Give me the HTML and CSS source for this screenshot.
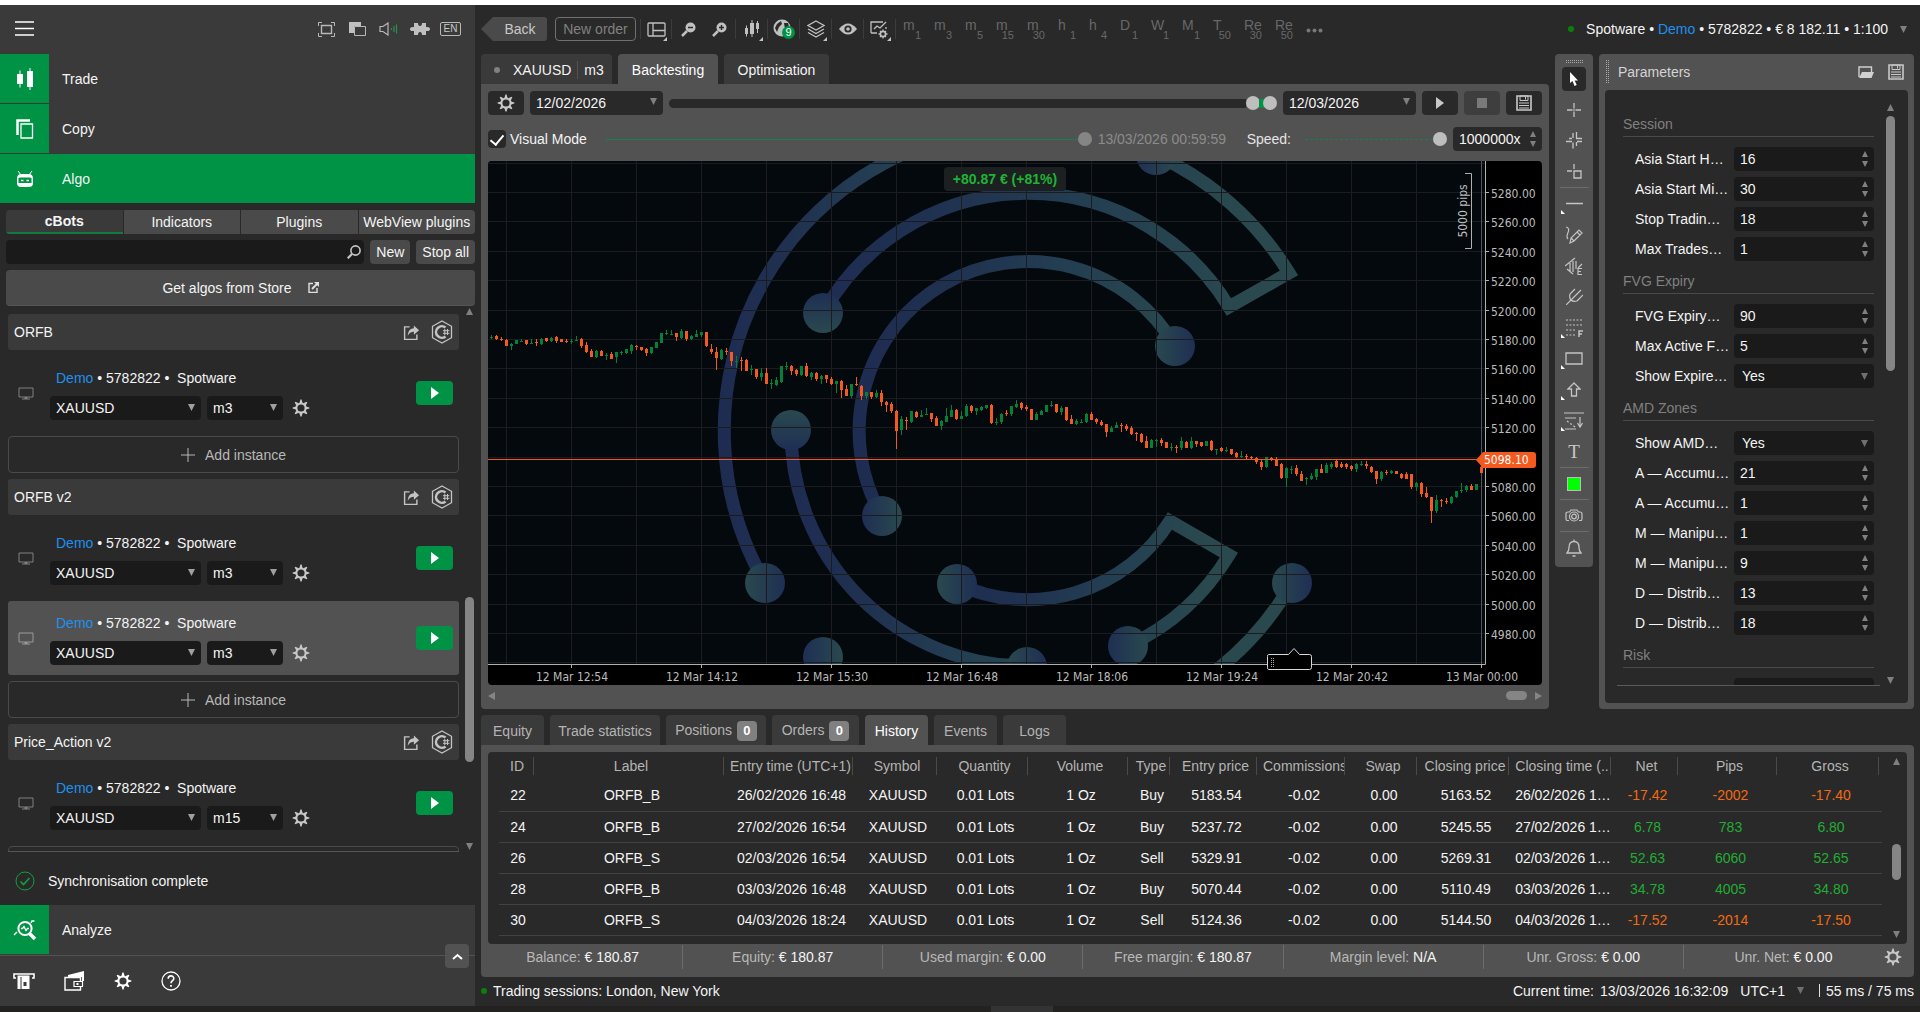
FILE: index.html
```html
<!DOCTYPE html>
<html lang="en">
<head>
<meta charset="utf-8">
<title>Algo – Backtesting XAUUSD m3</title>
<link rel="stylesheet" href="styles.css">
</head>
<body>
<svg class="sprite" aria-hidden="true">
  <symbol id="gear" viewBox="0 0 18 18"><circle cx="9" cy="9" r="4.6" fill="none" stroke="currentColor" stroke-width="2"/><g fill="currentColor"><path id="tooth" d="M7.400 4 8.400.6h1.200L10.600 4z"/><use href="#tooth" transform="rotate(45 9 9)"/><use href="#tooth" transform="rotate(90 9 9)"/><use href="#tooth" transform="rotate(135 9 9)"/><use href="#tooth" transform="rotate(180 9 9)"/><use href="#tooth" transform="rotate(225 9 9)"/><use href="#tooth" transform="rotate(270 9 9)"/><use href="#tooth" transform="rotate(315 9 9)"/></g></symbol>
  <symbol id="csharp" viewBox="0 0 22 24"><path d="M11 1 20.500 6.300v11.400L11 23 1.500 17.700V6.300z" fill="none" stroke="currentColor" stroke-width="1.300"/><path d="M14.500 7.500A5.800 5.800 0 1 0 14.500 16.500" fill="none" stroke="currentColor" stroke-width="2.600"/><path d="M13.800 9v6M16.500 9v6M12 10.700h6.400M12 13.300h6.400" stroke="currentColor" stroke-width="1"/></symbol>
  <symbol id="share" viewBox="0 0 18 18"><path d="M7 3H1.700v13.300h13V11" fill="none" stroke="currentColor" stroke-width="1.500"/><path d="M5 12.500C5.500 7 8 4.800 11.500 4.600V1.500l5.500 5-5.500 4.800V8.200C9 8.200 7 9 5 12.500z" fill="currentColor"/></symbol>
  <symbol id="monitor" viewBox="0 0 16 13"><path d="M1 1h14v9H1z" fill="none" stroke="currentColor"/><path d="M6.500 10h3v1.500H12v1H4v-1h2.500z" fill="currentColor"/></symbol>
  <symbol id="play" viewBox="0 0 10 12"><path d="M1 0 9 6 1 12z" fill="currentColor"/></symbol>
  <symbol id="plus" viewBox="0 0 14 14"><path d="M0 7h14M7 0v14" stroke="currentColor"/></symbol>
  <symbol id="down" viewBox="0 0 8 7"><path d="M0 0h7L3.500 7z" fill="currentColor"/></symbol>
  <symbol id="up" viewBox="0 0 8 7"><path d="M0 7h7L3.500 0z" fill="currentColor"/></symbol>
  <symbol id="spin" viewBox="0 0 8 18"><path d="M1 7h6L4 1zM1 11h6l-3 6z" fill="currentColor"/></symbol>
  <symbol id="disk" viewBox="0 0 16 16"><path d="M1 1h14v14H1z" fill="none" stroke="currentColor" stroke-width="1.600"/><path d="M4 1h8v4.500H4zM9.500 2v2.500" fill="none" stroke="currentColor"/><path d="M3 8h10M3 10.500h10M3 13h10" stroke="currentColor"/></symbol>
</svg>

<div class="app">
<aside class="sidebar">
  <header class="side-top">
    <button class="icon-btn" aria-label="Menu"><svg width="20" height="16" viewBox="0 0 20 16"><path d="M0 1h19M0 7.500h19M0 14h19" stroke="#fff" stroke-width="1.300"/></svg></button>
    <div class="side-tools">
      <button class="icon-btn" aria-label="Full screen"><svg width="17" height="15" viewBox="0 0 17 15" fill="none" stroke="#b8b8b8"><path d="M3.500 3.500h10v8h-10z" stroke-width="1.400"/><path d="M.5 4V.5H4M13 .5h3.500V4M16.500 11v3.500H13M4 14.500H.5V11"/></svg></button>
      <button class="icon-btn" aria-label="Windows"><svg width="17" height="15" viewBox="0 0 17 15"><path d="M0 0h12v4H5v7H0z" fill="#c0c0c0"/><path d="M5.500 4.500h11v9h-11z" fill="none" stroke="#b8b8b8"/></svg></button>
      <button class="icon-btn" aria-label="Sound"><svg width="20" height="14" viewBox="0 0 20 14"><path d="M1 4.500h3L9 1v12L4 9.500H1z" fill="none" stroke="#b8b8b8" stroke-width="1.200"/><path d="M12.500 6v2M15 4v6M17.500 2.500v9" stroke="#2a9048" stroke-width="1.200"/></svg></button>
      <button class="icon-btn" aria-label="Plugins"><svg width="20" height="14" viewBox="0 0 20 14"><path d="M4 1h4q0 3 2 3t2-3h4v4q4-.5 4 2t-4 2v4h-4q0-3-2-3t-2 3H4V9Q0 9.500 0 7t4-2z" fill="#c0c0c0"/></svg></button>
      <button class="lang">EN</button>
    </div>
  </header>

  <nav class="nav">
    <a href="#trade" class="nav-row"><span class="nav-icon"><svg width="18" height="22" viewBox="0 0 18 22" fill="#fff"><path d="M1 6h6v10H1zM3.500 2.500h1v17h-1zM11 3h6v16h-6zM13.500 0h1v22h-1z"/></svg></span>Trade</a>
    <a href="#copy" class="nav-row"><span class="nav-icon"><svg width="18" height="20" viewBox="0 0 18 20" fill="none" stroke="#fff"><path d="M1.500 16V1.500H14" stroke-width="2.500"/><path d="M5 5h11.500v14H5z" stroke-width="1.300"/></svg></span>Copy</a>
    <a href="#algo" class="nav-row nav-active"><span class="nav-icon"><svg width="18" height="16" viewBox="0 0 18 16"><path d="M2 0 5 4M16 0l-3 4" stroke="#fff"/><path d="M1 8Q1 3 5 3h8q4 0 4 5v4q0 4-4 4H5q-4 0-4-4z" fill="#fff"/><path d="M2.500 7.500Q3 6.500 4.500 6.500h9q1.500 0 2 1v4.500h-13z" fill="#009245"/><path d="M5 9.500h2.500M10.500 9.500H13" stroke="#fff" stroke-width="1.500"/></svg></span>Algo</a>
  </nav>

  <div class="algo">
    <div class="side-tabs" role="tablist">
      <button class="side-tab on" role="tab">cBots</button><button class="side-tab" role="tab">Indicators</button><button class="side-tab" role="tab">Plugins</button><button class="side-tab" role="tab">WebView plugins</button>
    </div>
    <div class="search-row">
      <label class="search"><input type="search" aria-label="Search cBots"><svg width="14" height="14" viewBox="0 0 14 14" fill="none" stroke="#c4c4c4"><circle cx="8.500" cy="5.500" r="4.600" stroke-width="1.600"/><path d="M5 9 .7 13.300" stroke-width="2.200"/></svg></label>
      <button class="btn">New</button>
      <button class="btn">Stop all</button>
    </div>
    <button class="store">Get algos from Store <svg width="11" height="11" viewBox="0 0 11 11" fill="none" stroke="#e0e0e0"><path d="M5 1.500H1v9h8V6" stroke-width="1.400"/><path d="M4 7l5-5" stroke-width="2"/><path d="M6 0h5v5z" fill="#e0e0e0" stroke="none"/></svg></button>
    <div class="list-wrap">
      <div class="list">
        <div class="bot-head"><span>ORFB</span><svg width="17" height="17"><use href="#share"/></svg><svg width="22" height="24"><use href="#csharp"/></svg></div>
        <div class="inst">
          <svg class="mon" width="16" height="13"><use href="#monitor"/></svg>
          <div class="inst-main">
            <p><span class="demo">Demo</span> • 5782822 •&nbsp; Spotware</p>
            <div class="inst-ctl"><span class="sel sel-sym"><select aria-label="Symbol"><option>XAUUSD</option></select><svg width="8" height="7"><use href="#down"/></svg></span><span class="sel sel-tf"><select aria-label="Timeframe"><option>m3</option></select><svg width="8" height="7"><use href="#down"/></svg></span><button class="icon-btn" aria-label="Settings"><svg width="18" height="18"><use href="#gear"/></svg></button></div>
          </div>
          <button class="run" aria-label="Start"><svg width="10" height="12"><use href="#play"/></svg></button>
        </div>
        <button class="add"><svg width="14" height="14"><use href="#plus"/></svg>Add instance</button>
        <div class="bot-head"><span>ORFB v2</span><svg width="17" height="17"><use href="#share"/></svg><svg width="22" height="24"><use href="#csharp"/></svg></div>
        <div class="inst">
          <svg class="mon" width="16" height="13"><use href="#monitor"/></svg>
          <div class="inst-main">
            <p><span class="demo">Demo</span> • 5782822 •&nbsp; Spotware</p>
            <div class="inst-ctl"><span class="sel sel-sym"><select aria-label="Symbol"><option>XAUUSD</option></select><svg width="8" height="7"><use href="#down"/></svg></span><span class="sel sel-tf"><select aria-label="Timeframe"><option>m3</option></select><svg width="8" height="7"><use href="#down"/></svg></span><button class="icon-btn" aria-label="Settings"><svg width="18" height="18"><use href="#gear"/></svg></button></div>
          </div>
          <button class="run" aria-label="Start"><svg width="10" height="12"><use href="#play"/></svg></button>
        </div>
        <div class="inst inst-on">
          <svg class="mon" width="16" height="13"><use href="#monitor"/></svg>
          <div class="inst-main">
            <p><span class="demo">Demo</span> • 5782822 •&nbsp; Spotware</p>
            <div class="inst-ctl"><span class="sel sel-sym"><select aria-label="Symbol"><option>XAUUSD</option></select><svg width="8" height="7"><use href="#down"/></svg></span><span class="sel sel-tf"><select aria-label="Timeframe"><option>m3</option></select><svg width="8" height="7"><use href="#down"/></svg></span><button class="icon-btn" aria-label="Settings"><svg width="18" height="18"><use href="#gear"/></svg></button></div>
          </div>
          <button class="run" aria-label="Start"><svg width="10" height="12"><use href="#play"/></svg></button>
        </div>
        <button class="add"><svg width="14" height="14"><use href="#plus"/></svg>Add instance</button>
        <div class="bot-head"><span>Price_Action v2</span><svg width="17" height="17"><use href="#share"/></svg><svg width="22" height="24"><use href="#csharp"/></svg></div>
        <div class="inst">
          <svg class="mon" width="16" height="13"><use href="#monitor"/></svg>
          <div class="inst-main">
            <p><span class="demo">Demo</span> • 5782822 •&nbsp; Spotware</p>
            <div class="inst-ctl"><span class="sel sel-sym"><select aria-label="Symbol"><option>XAUUSD</option></select><svg width="8" height="7"><use href="#down"/></svg></span><span class="sel sel-tf"><select aria-label="Timeframe"><option>m15</option></select><svg width="8" height="7"><use href="#down"/></svg></span><button class="icon-btn" aria-label="Settings"><svg width="18" height="18"><use href="#gear"/></svg></button></div>
          </div>
          <button class="run" aria-label="Start"><svg width="10" height="12"><use href="#play"/></svg></button>
        </div>
        <div class="add add-next"></div>
      </div>
      <div class="vbar vbar-list"><svg width="8" height="7"><use href="#up"/></svg><div class="vtrack"><i class="thumb"></i></div><svg width="8" height="7"><use href="#down"/></svg></div>
    </div>
    <div class="sync"><svg width="20" height="20" viewBox="0 0 20 20" fill="none" stroke="#12a03c"><circle cx="10" cy="10" r="9"/><path d="m5.500 10.500 3 3L14.500 7" stroke-width="1.600"/></svg>Synchronisation complete</div>
  </div>

  <a href="#analyze" class="nav-row nav-last"><span class="nav-icon"><svg width="24" height="22" viewBox="0 0 24 22" fill="none" stroke="#fff"><circle cx="12" cy="9.500" r="6.600" stroke-width="2"/><path d="M8 9.500h1.500l1.500-2 2 4 1.500-2H16" stroke-width="1.300"/><path d="m16.500 14.500 5.500 5.500" stroke-width="3.600"/><path d="M1 16l3-3M18 4l1-2h2.500" stroke-width="1.500"/></svg></span>Analyze</a>
  <footer class="side-foot">
    <button class="icon-btn" aria-label="Deposit"><svg width="22" height="16" viewBox="0 0 22 16"><path d="M3 5H1V1h20v4h-2" fill="none" stroke="#fff" stroke-width="1.600"/><path d="M4.500 2.500h12V16h-12z" fill="#fff"/><path d="M8 4v12" stroke="#3a3a3a" stroke-width="1"/><path d="M10.500 9h3v4h-3z" fill="#3a3a3a"/></svg></button>
    <button class="icon-btn" aria-label="Wallet"><svg width="21" height="20" viewBox="0 0 21 20"><path d="M4 4 20 0v10h-2V6H4z" fill="#fff"/><path d="M16.500 10V6.500H1v12.500h15.500V16" fill="none" stroke="#fff" stroke-width="1.400"/><path d="M10 10.500h8.500v5H10z" fill="#3a3a3a" stroke="#fff" stroke-width="1.200"/><path d="M12.500 12h2v2h-2z" fill="#fff"/></svg></button>
    <button class="icon-btn" aria-label="Settings"><svg width="18" height="18"><use href="#gear"/></svg></button>
    <button class="icon-btn" aria-label="Help"><svg width="20" height="20" viewBox="0 0 20 20" fill="none" stroke="#fff"><circle cx="10" cy="10" r="9" stroke-width="1.300"/><path d="M7.200 7.800C7.200 4 12.800 4 12.800 7.500c0 2.200-2.800 2.200-2.800 4.700" stroke-width="1.600"/><path d="M10 14v1.800" stroke-width="1.800"/></svg></button>
    <button class="collapse" aria-label="Collapse"><svg width="11" height="7" viewBox="0 0 11 7"><path d="m1 6 4.500-4L10 6" fill="none" stroke="#fff" stroke-width="2"/></svg></button>
  </footer>
</aside>

<main class="main">
  <header class="toolbar">
    <button class="back">Back</button>
    <button class="new-order" disabled>New order</button>
    <div class="tool-icons">
      <button class="tool corner" aria-label="Layout"><svg width="19" height="15" viewBox="0 0 19 15" fill="none" stroke="#c0c0c0" stroke-width="1.300"><rect x="1" y="1" width="17" height="13" rx="1"/><path d="M6 1v13M6 8.500h12"/></svg></button>
      <button class="tool sep" aria-label="Zoom out"><svg width="15" height="15" viewBox="0 0 15 15"><circle cx="9.500" cy="5.500" r="5" fill="#c0c0c0"/><path d="M6 9 1 14" stroke="#c0c0c0" stroke-width="2.500"/><path d="M7 5.500h5" stroke="#292929" stroke-width="1.500"/></svg></button>
      <button class="tool" aria-label="Zoom in"><svg width="15" height="15" viewBox="0 0 15 15"><circle cx="9.500" cy="5.500" r="5" fill="#c0c0c0"/><path d="M6 9 1 14" stroke="#c0c0c0" stroke-width="2.500"/><path d="M7 5.500h5M9.500 3v5" stroke="#292929" stroke-width="1.500"/></svg></button>
      <button class="tool sep corner" aria-label="Chart type"><svg width="16" height="18" viewBox="0 0 16 18" fill="#c0c0c0"><path d="M1 8h3v6H1zM2 5.500h1v11H2zM6 3h4v11H6zM7.500 0h1v17h-1zM13 1h1v12h-1zM12 3h3v6h-3z"/></svg></button>
      <button class="tool sep" aria-label="Symbols"><svg width="24" height="20" viewBox="0 0 24 20"><circle cx="10" cy="9" r="8.500" fill="#c0c0c0"/><path d="M5 5l4-3 1 3-3 3-2 5-2-4zM12 4h4l1 4-4 2z" fill="#292929"/><circle cx="16.500" cy="13.500" r="6.500" fill="#009245"/><text x="16.500" y="17" class="badge-n">9</text></svg></button>
      <button class="tool sep corner" aria-label="Objects"><svg width="18" height="18" viewBox="0 0 18 18" fill="none" stroke="#c0c0c0" stroke-width="1.300"><path d="m9 1 8 4.500L9 10 1 5.500zM1 9l8 4.500L17 9M1 12.500 9 17l8-4.500"/></svg></button>
      <button class="tool sep" aria-label="Visibility"><svg width="20" height="12" viewBox="0 0 20 12"><path d="M1 6Q10-5 19 6 10 17 1 6z" fill="#c0c0c0"/><circle cx="10" cy="6" r="3.600" fill="#292929"/><circle cx="10" cy="6" r="1.800" fill="#c0c0c0"/></svg></button>
      <button class="tool sep corner" aria-label="Chart settings"><svg width="20" height="19" viewBox="0 0 20 19" fill="none" stroke="#c0c0c0" stroke-width="1.300"><path d="M16 7v2M1 13V2h12M1 13h6M4 9l3-3 3 2 6-6"/><circle cx="13" cy="14" r="2.600" stroke-width="1.600"/><path d="M13 9.500v2M13 16.500v2M8.500 14h2M15.500 14h2M10 11l1 1M15 16l1 1M16 11l-1 1M11 16l-1 1"/></svg></button>
    </div>
    <div class="frames">
      <button>m<sub>1</sub></button><button>m<sub>3</sub></button><button>m<sub>5</sub></button><button>m<sub>15</sub></button><button>m<sub>30</sub></button><button>h<sub>1</sub></button><button>h<sub>4</sub></button><button>D<sub>1</sub></button><button>W<sub>1</sub></button><button>M<sub>1</sub></button><button>T<sub>50</sub></button><button>Re<sub>30</sub></button><button>Re<sub>50</sub></button>
      <button class="more" aria-label="More"><svg width="17" height="5" viewBox="0 0 17 5" fill="#777"><circle cx="2.500" cy="2.500" r="2"/><circle cx="8.500" cy="2.500" r="2"/><circle cx="14.500" cy="2.500" r="2"/></svg></button>
    </div>
    <button class="account"><i class="dot"></i><span>Spotware • <span class="demo">Demo</span> • 5782822 • € 8 182.11 • 1:100</span><svg width="8" height="7"><use href="#down"/></svg></button>
  </header>

  <div class="work">
    <section class="center">
      <div class="tabs">
        <button class="tab tab-sym"><i></i><span>XAUUSD</span><span>m3</span></button>
        <button class="tab tab-mid on">Backtesting</button>
        <button class="tab tab-opt">Optimisation</button>
      </div>
      <div class="panel">
        <div class="ctl-row">
          <button class="dark w36" aria-label="Backtest settings"><svg width="18" height="18"><use href="#gear"/></svg></button>
          <span class="sel sel-date"><select aria-label="From"><option>12/02/2026</option></select><svg width="8" height="7"><use href="#down"/></svg></span>
          <div class="range"><i class="track"></i><i class="knob"></i><i class="fill"></i><i class="knob"></i></div>
          <span class="sel sel-date"><select aria-label="To"><option>12/03/2026</option></select><svg width="8" height="7"><use href="#down"/></svg></span>
          <button class="dark w36" aria-label="Play"><svg width="10" height="12"><use href="#play"/></svg></button>
          <button class="dark w36 off" disabled aria-label="Stop"><svg width="10" height="10"><rect width="10" height="10" fill="#7a7a7a"/></svg></button>
          <button class="dark w36" aria-label="Save"><svg width="16" height="16"><use href="#disk"/></svg></button>
        </div>
        <div class="ctl-row">
          <label class="check"><input type="checkbox" checked>Visual Mode</label>
          <div class="range progress"><i class="line"></i><i class="knob dim"></i></div>
          <span class="muted">13/03/2026 00:59:59</span>
          <label class="speed" for="speed">Speed:</label>
          <div class="range speedbar"><i class="line dashed"></i><i class="knob"></i></div>
          <span class="spin spin-speed"><input id="speed" type="text" value="1000000x"><svg width="8" height="18"><use href="#spin"/></svg></span>
        </div>
        <div class="chart"><svg id="chart" viewBox="0 0 1054 524" preserveAspectRatio="none" role="img" aria-label="XAUUSD m3 chart"></svg></div>
        <div class="hbar"><svg width="7" height="8" viewBox="0 0 7 8"><path d="M7 0v8L0 4z" fill="#858585"/></svg><i class="thumb"></i><svg width="7" height="8" viewBox="0 0 7 8"><path d="M0 0v8l7-4z" fill="#858585"/></svg></div>
      </div>
    </section>

    <aside class="draw">
      <i class="grip"></i>
      <button class="on" aria-label="Cursor"><svg width="10" height="14" viewBox="0 0 10 14"><path d="M1 0v11l2.500-2 2 5 2.200-1-2-4.600H9z" fill="#fff"/></svg></button>
      <button aria-label="Crosshair"><svg width="14" height="14" viewBox="0 0 14 14" stroke="#c4c4c4" stroke-width="1.300"><path d="M0 7h5.500M8.500 7H14M7 0v5.500M7 8.500V14M6.300 7h1.400"/></svg></button>
      <button aria-label="Sync crosshair"><svg width="17" height="17" viewBox="0 0 17 17" stroke="#c4c4c4" stroke-width="1.300"><path d="M7 1v5M10.500 0v6.500M10 6.500h6M0 9.500h6M3 6.500h3M7 10.500v6M10.500 10v4M11 9.500h5"/></svg></button>
      <button aria-label="Measure"><svg width="15" height="15" viewBox="0 0 15 15" fill="none" stroke="#c4c4c4" stroke-width="1.300"><path d="M0 7h5M7 0v5M7 7h7v7H7z"/></svg></button>
      <hr>
      <button class="corner" aria-label="Line"><svg width="17" height="3"><path d="M0 1.500h17" stroke="#c4c4c4" stroke-width="1.500"/></svg></button>
      <button aria-label="Pencil"><svg width="18" height="18" viewBox="0 0 18 18" fill="none" stroke="#c4c4c4" stroke-width="1.200"><path d="M1 1q4 1 2 5.500T3 13M5 17l1-5 8-8 3 3-8 8zM12 6l3 3M6 12l3 3"/></svg></button>
      <button aria-label="Elliott waves"><svg width="18" height="18" viewBox="0 0 18 18" fill="none" stroke="#c4c4c4" stroke-width="1.200"><path d="M0 9 10 1M5 6v8M8 4v11M11 4v8M2 12l6 5M13 11l4-4M17 11.500h-4v6h4M13 14.500h3"/></svg></button>
      <button aria-label="Pitchfork"><svg width="17" height="17" viewBox="0 0 17 17" fill="none" stroke="#c4c4c4" stroke-width="1.200"><path d="M0 17l5-5M4 6q-1 4 1 6t6 1M4 6l5-5M5 12 15 2M11 13l6-6"/></svg></button>
      <button class="corner" aria-label="Fibonacci"><svg width="18" height="18" viewBox="0 0 18 18" fill="none" stroke="#c4c4c4" stroke-width="1.200"><path d="M1 1h17M1 6h17M1 11h9M1 16h9" stroke-dasharray="2 1.500"/><path d="M14 18v-6h4M14 15h3" stroke-width="1.500"/></svg></button>
      <button class="corner" aria-label="Rectangle"><svg width="18" height="13" viewBox="0 0 18 13"><path d="M1 1h16v11H1z" fill="none" stroke="#c4c4c4" stroke-width="1.300"/></svg></button>
      <button class="corner" aria-label="Arrow"><svg width="14" height="15" viewBox="0 0 14 15"><path d="m7 1 6 6H9.500v7h-5V7H1z" fill="none" stroke="#c4c4c4" stroke-width="1.300"/></svg></button>
      <button class="corner" aria-label="Position"><svg width="20" height="18" viewBox="0 0 20 18" fill="none" stroke="#c4c4c4" stroke-width="1.200"><path d="M0 1h20M1 6h11M1 17h11M16 5v9M13.500 11l2.500 4 2.500-4"/><path d="M3 9l8 6" stroke-dasharray="2 2"/></svg></button>
      <button class="text-tool" aria-label="Text">T</button>
      <hr>
      <button aria-label="Colour"><i class="swatch"></i></button>
      <hr>
      <button aria-label="Screenshot"><svg width="18" height="13" viewBox="0 0 18 13" fill="none" stroke="#c4c4c4" stroke-width="1.200"><path d="M4 11.500H2Q1 11.500 1 9V5Q1 3 3 3h1.500L6 1h6l1.500 2H15q2 0 2 2v4q0 2.500-1 2.500h-2"/><circle cx="9" cy="7.500" r="4.500"/><circle cx="9" cy="7.500" r="2.300"/></svg></button>
      <hr>
      <button aria-label="Alerts"><svg width="16" height="18" viewBox="0 0 16 18" fill="none" stroke="#c4c4c4" stroke-width="1.300"><path d="M1 14h14Q13 12 13 8.500 13 2.500 8 2.500T3 8.500Q3 12 1 14zM8 .5v2M6.500 17h3"/></svg></button>
    </aside>

    <aside class="params">
      <header><i class="vgrip"></i><h2>Parameters</h2><button class="icon-btn" aria-label="Open"><svg width="16" height="12" viewBox="0 0 16 12"><path d="M1 11V1h12.500v5" fill="none" stroke="#d0d0d0" stroke-width="1.400"/><path d="M4 6h12l-2.500 6H1z" fill="#d0d0d0"/></svg></button><button class="icon-btn" aria-label="Save"><svg width="16" height="16"><use href="#disk"/></svg></button></header>
      <div class="params-body">
        <div class="params-list">
          <h3>Session</h3>
          <div class="field"><label for="p1">Asia Start H…</label><span class="spin"><input id="p1" type="text" value="16"><svg width="8" height="18"><use href="#spin"/></svg></span></div>
          <div class="field"><label for="p2">Asia Start Mi…</label><span class="spin"><input id="p2" type="text" value="30"><svg width="8" height="18"><use href="#spin"/></svg></span></div>
          <div class="field"><label for="p3">Stop Tradin…</label><span class="spin"><input id="p3" type="text" value="18"><svg width="8" height="18"><use href="#spin"/></svg></span></div>
          <div class="field"><label for="p4">Max Trades…</label><span class="spin"><input id="p4" type="text" value="1"><svg width="8" height="18"><use href="#spin"/></svg></span></div>
          <h3>FVG Expiry</h3>
          <div class="field"><label for="p5">FVG Expiry…</label><span class="spin"><input id="p5" type="text" value="90"><svg width="8" height="18"><use href="#spin"/></svg></span></div>
          <div class="field"><label for="p6">Max Active F…</label><span class="spin"><input id="p6" type="text" value="5"><svg width="8" height="18"><use href="#spin"/></svg></span></div>
          <div class="field"><label for="p7">Show Expire…</label><span class="sel"><select id="p7"><option>Yes</option></select><svg width="8" height="7"><use href="#down"/></svg></span></div>
          <h3>AMD Zones</h3>
          <div class="field"><label for="p8">Show AMD…</label><span class="sel"><select id="p8"><option>Yes</option></select><svg width="8" height="7"><use href="#down"/></svg></span></div>
          <div class="field"><label for="p9">A — Accumu…</label><span class="spin"><input id="p9" type="text" value="21"><svg width="8" height="18"><use href="#spin"/></svg></span></div>
          <div class="field"><label for="p10">A — Accumu…</label><span class="spin"><input id="p10" type="text" value="1"><svg width="8" height="18"><use href="#spin"/></svg></span></div>
          <div class="field"><label for="p11">M — Manipu…</label><span class="spin"><input id="p11" type="text" value="1"><svg width="8" height="18"><use href="#spin"/></svg></span></div>
          <div class="field"><label for="p12">M — Manipu…</label><span class="spin"><input id="p12" type="text" value="9"><svg width="8" height="18"><use href="#spin"/></svg></span></div>
          <div class="field"><label for="p13">D — Distrib…</label><span class="spin"><input id="p13" type="text" value="13"><svg width="8" height="18"><use href="#spin"/></svg></span></div>
          <div class="field"><label for="p14">D — Distrib…</label><span class="spin"><input id="p14" type="text" value="18"><svg width="8" height="18"><use href="#spin"/></svg></span></div>
          <h3>Risk</h3>
          <div class="field"><span></span><span class="spin"></span></div>
        </div>
        <div class="vbar vbar-params"><svg width="8" height="7"><use href="#up"/></svg><div class="vtrack"><i class="thumb"></i></div><svg width="8" height="7"><use href="#down"/></svg></div>
      </div>
    </aside>
  </div>

  <section class="trades">
    <div class="tabs tabs-low">
      <button class="tab w63">Equity</button><button class="tab w110">Trade statistics</button><button class="tab w100">Positions <b>0</b></button><button class="tab w87">Orders <b>0</b></button><button class="tab w63 on">History</button><button class="tab w63">Events</button><button class="tab w63">Logs</button>
    </div>
    <div class="trades-panel">
      <div class="table-box">
        <table>
          <colgroup><col class="c38"><col class="c190"><col class="c129"><col class="c84"><col class="c91"><col class="c100"><col class="c42"><col class="c87"><col class="c88"><col class="c72"><col class="c92"><col class="c102"><col class="c67"><col class="c99"><col class="c102"></colgroup>
          <thead><tr><th><div>ID</div></th><th><div>Label</div></th><th><div>Entry time (UTC+1)</div></th><th><div>Symbol</div></th><th><div>Quantity</div></th><th><div>Volume</div></th><th><div>Type</div></th><th><div>Entry price</div></th><th><div>Commissions</div></th><th><div>Swap</div></th><th><div>Closing price</div></th><th><div>Closing time (..</div></th><th><div>Net</div></th><th><div>Pips</div></th><th><div>Gross</div></th></tr></thead>
          <tbody>
          <tr><td>22</td><td>ORFB_B</td><td>26/02/2026 16:48</td><td>XAUUSD</td><td>0.01 Lots</td><td>1 Oz</td><td>Buy</td><td>5183.54</td><td>-0.02</td><td>0.00</td><td>5163.52</td><td>26/02/2026 1…</td><td class="neg">-17.42</td><td class="neg">-2002</td><td class="neg">-17.40</td></tr>
          <tr><td>24</td><td>ORFB_B</td><td>27/02/2026 16:54</td><td>XAUUSD</td><td>0.01 Lots</td><td>1 Oz</td><td>Buy</td><td>5237.72</td><td>-0.02</td><td>0.00</td><td>5245.55</td><td>27/02/2026 1…</td><td class="pos">6.78</td><td class="pos">783</td><td class="pos">6.80</td></tr>
          <tr><td>26</td><td>ORFB_S</td><td>02/03/2026 16:54</td><td>XAUUSD</td><td>0.01 Lots</td><td>1 Oz</td><td>Sell</td><td>5329.91</td><td>-0.02</td><td>0.00</td><td>5269.31</td><td>02/03/2026 1…</td><td class="pos">52.63</td><td class="pos">6060</td><td class="pos">52.65</td></tr>
          <tr><td>28</td><td>ORFB_B</td><td>03/03/2026 16:48</td><td>XAUUSD</td><td>0.01 Lots</td><td>1 Oz</td><td>Buy</td><td>5070.44</td><td>-0.02</td><td>0.00</td><td>5110.49</td><td>03/03/2026 1…</td><td class="pos">34.78</td><td class="pos">4005</td><td class="pos">34.80</td></tr>
          <tr><td>30</td><td>ORFB_S</td><td>04/03/2026 18:24</td><td>XAUUSD</td><td>0.01 Lots</td><td>1 Oz</td><td>Sell</td><td>5124.36</td><td>-0.02</td><td>0.00</td><td>5144.50</td><td>04/03/2026 1…</td><td class="neg">-17.52</td><td class="neg">-2014</td><td class="neg">-17.50</td></tr>
          </tbody>
        </table>
        <div class="vbar vbar-table"><svg width="8" height="7"><use href="#up"/></svg><div class="vtrack"><i class="thumb"></i></div><svg width="8" height="7"><use href="#down"/></svg></div>
      </div>
      <footer class="sums">
        <span>Balance: <em>€ 180.87</em></span><span>Equity: <em>€ 180.87</em></span><span>Used margin: <em>€ 0.00</em></span><span>Free margin: <em>€ 180.87</em></span><span>Margin level: <em>N/A</em></span><span>Unr. Gross: <em>€ 0.00</em></span><span>Unr. Net: <em>€ 0.00</em></span>
        <button class="icon-btn" aria-label="Settings"><svg width="18" height="18"><use href="#gear"/></svg></button>
      </footer>
    </div>
  </section>

  <footer class="status">
    <i class="dot"></i><span class="grow">Trading sessions: London, New York</span>
    <span>Current time:</span><span>13/03/2026 16:32:09</span><button class="utc">UTC+1<svg width="8" height="7"><use href="#down"/></svg></button><i class="bar"></i><span>55 ms / 75 ms</span>
  </footer>
</main>
</div>
<div class="taskbar"><i></i></div>
<script src="chart.js"></script>
</body>
</html>
```
FILE: styles.css
```css
* { box-sizing: border-box; }
html, body { height: 100%; }
body {
  margin: 0;
  display: flex;
  flex-direction: column;
  background: #292929;
  border-top: 5px solid #fff;
  color: #f4f4f4;
  font: 14px/18px "Liberation Sans", Arial, sans-serif;
  overflow: hidden;
}
button, input, select { font: inherit; color: inherit; border: 0; padding: 0; margin: 0; background: none; }
button { cursor: pointer; }
p, h2, h3 { margin: 0; font: inherit; }
a { color: inherit; text-decoration: none; }
svg { display: block; flex: none; }
i { display: block; flex: none; }
.sprite { position: absolute; width: 0; height: 0; }
.demo { color: #1e90f0; }
.icon-btn { display: grid; place-items: center; color: #c8c8c8; }
.dot { width: 6px; height: 6px; border-radius: 50%; background: #0a800a; }

.app { flex: 1; min-height: 0; display: grid; grid-template-columns: 475px minmax(0, 1fr); column-gap: 6px; }
.taskbar { height: 6px; background: #242121; display: flex; justify-content: center; padding-left: 124px; flex: none; }
.taskbar i { width: 62px; background: #333; }

/* Sidebar */
.sidebar { background: #3a3a3a; display: flex; flex-direction: column; min-height: 0; }
.side-top { height: 48px; display: flex; align-items: center; justify-content: space-between; padding: 0 14px 0 15px; }
.side-tools { display: flex; align-items: center; gap: 10px; }
.side-tools .icon-btn { width: 21px; }
.lang { width: 21px; height: 14px; border: 1px solid #b8b8b8; border-radius: 2px; font-size: 10px; line-height: 10px; color: #c8c8c8; }
.nav-row { display: flex; align-items: center; gap: 13px; height: 50px; flex: none; border-top: 1px solid #3a3a3a; }
.nav-icon { width: 49px; height: 49px; background: #009245; display: grid; place-items: center; }
.nav-active { background: #009245; }
.nav-last { border-top: 0; border-bottom: 1px solid #3a3a3a; }
.algo { flex: 1; min-height: 0; background: #292929; display: flex; flex-direction: column; padding: 7px 0 0 6px; }
.side-tabs { display: grid; grid-template-columns: repeat(4, 1fr); gap: 1px; height: 24px; flex: none; border-radius: 4px; overflow: hidden; }
.side-tab { background: #4a4a4a; white-space: nowrap; }
.side-tab.on { background: #3a3a3a; font-weight: bold; border-bottom: 2px solid #117a3f; }
.search-row { display: flex; gap: 6px; margin-top: 6px; height: 24px; flex: none; }
.search { flex: 1; display: flex; align-items: center; background: #1a1a1a; border-radius: 4px; padding: 0 3px; }
.search input { flex: 1; min-width: 0; appearance: none; outline: 0; }
.btn { background: #4a4a4a; border-radius: 4px; padding: 0 6px; }
.store { flex: none; margin-top: 6px; height: 36px; border-radius: 4px; background: #4a4a4a; display: flex; align-items: center; justify-content: center; gap: 16px; border-bottom: 1px solid #555; }
.list-wrap { flex: 1; min-height: 0; display: flex; gap: 6px; padding: 0 1px 0 2px; }
.list { flex: 1; min-height: 0; overflow: hidden; padding-top: 8px; display: flex; flex-direction: column; gap: 6px; border-bottom: 1px solid #555; }
.bot-head { flex: none; height: 36px; background: #3a3a3a; border-radius: 3px; display: flex; align-items: center; gap: 11px; padding: 0 6px; color: #c4c4c4; }
.bot-head span { flex: 1; color: #f4f4f4; }
.inst { flex: none; height: 74px; display: flex; align-items: center; padding: 0 6px 0 10px; gap: 16px; border-radius: 3px; }
.inst-on { background: #525252; }
.mon { color: #808080; }
.inst-on .mon { color: #9a9a9a; }
.inst-main { flex: 1; display: flex; flex-direction: column; gap: 9px; padding-top: 2px; }
.inst-main p { padding-left: 6px; white-space: nowrap; }
.inst-ctl { display: flex; align-items: center; gap: 6px; }
.inst-ctl .icon-btn { margin-left: 3px; }
.run { width: 37px; height: 24px; border-radius: 4px; background: #009245; color: #fff; display: grid; place-items: center; }
.add { flex: none; height: 37px; border: 1px solid #4a4a4a; border-radius: 4px; color: #b8b8b8; display: flex; align-items: center; justify-content: center; gap: 10px; }
.sync { flex: none; height: 53px; display: flex; align-items: center; gap: 13px; padding: 4px 0 0 9px; }
.side-foot { flex: none; height: 51px; position: relative; border-top: 1px solid #525252; display: flex; align-items: center; padding-left: 13px; gap: 29px; }
.side-foot .icon-btn { color: #fff; }
.collapse { position: absolute; right: 6px; top: -12px; width: 24px; height: 24px; border-radius: 4px; background: #525252; display: grid; place-items: center; }

/* Shared form controls */
.sel, .spin { display: flex; align-items: center; height: 24px; background: #1a1a1a; border-radius: 4px; color: #a0a0a0; padding-right: 5px; }
.sel select { appearance: none; flex: 1; min-width: 0; height: 24px; padding-left: 6px; color: #f4f4f4; outline: 0; }
.spin input { flex: 1; min-width: 0; height: 24px; padding-left: 6px; color: #f4f4f4; outline: 0; }
.spin { color: #808080; }
.sel-sym { width: 151px; }
.sel-tf { width: 76px; }
.vbar { width: 9px; display: flex; flex-direction: column; align-items: center; gap: 5px; color: #808080; }
.vtrack { flex: 1; width: 9px; display: flex; flex-direction: column; }
.thumb { background: #858585; border-radius: 5px; }
.vbar-list { padding: 2px 0; }
.vbar-list .thumb { margin-top: 277px; height: 165px; }

/* Toolbar */
.main { display: flex; flex-direction: column; min-width: 0; min-height: 0; padding-right: 6px; }
.toolbar { height: 49px; flex: none; display: flex; align-items: center; padding-bottom: 1px; }
.back { width: 66px; height: 24px; padding-left: 12px; background: #4a4a4a; color: #c8c8c8; clip-path: polygon(0 50%, 12px 0, 100% 0, 100% 100%, 12px 100%); border-radius: 3px; }
.new-order { margin-left: 8px; width: 81px; height: 24px; border: 1px solid #707070; border-radius: 4px; color: #808080; white-space: nowrap; }
.tool-icons { display: flex; margin-left: 4px; }
.tool { position: relative; width: 32px; height: 20px; display: grid; place-items: center; border-right: 1px solid #3c3c3c; }
.tool:first-child { border-left: 1px solid #3c3c3c; }
.tool:nth-child(2) { border-right: 0; }
.corner::after { content: ""; position: absolute; right: 4px; bottom: -2px; border: 2px solid #c4c4c4; border-top-color: transparent; border-left-color: transparent; }
.badge-n { font: 11px "Liberation Sans", Arial, sans-serif; fill: #fff; text-anchor: middle; }
.frames { display: flex; margin-left: 7px; color: #686868; }
.frames button { position: relative; width: 31px; height: 28px; text-align: left; padding-bottom: 9px; }
.frames sub { position: absolute; right: 13px; bottom: 1px; font-size: 11px; line-height: 14px; }
.frames .more { padding: 3px 0 0; }
.account { margin-left: auto; display: flex; align-items: center; gap: 12px; white-space: nowrap; padding-right: 6px; color: #f4f4f4; }
.account svg { color: #808080; }

/* Centre */
.work { flex: 1; min-height: 0; display: grid; grid-template-columns: minmax(0, 1fr) 38px 315px; gap: 6px; align-items: start; }
.center { height: 100%; min-height: 0; display: flex; flex-direction: column; }
.tabs { display: flex; gap: 6px; height: 30px; flex: none; }
.tab { background: #3a3a3a; border-radius: 4px 4px 0 0; white-space: nowrap; padding-top: 2px; }
.tab.on { background: #525252; color: #fff; }
.tab-sym { width: 131px; display: flex; align-items: center; padding-left: 13px; }
.tab-sym i { width: 6px; height: 6px; border-radius: 50%; background: #808080; }
.tab-sym span { padding-left: 13px; }
.tab-sym span + span { margin-left: 6px; padding-left: 6px; border-left: 1px solid #525252; }
.tab-mid { width: 100px; }
.tab-opt { width: 105px; }
.panel { flex: 1; min-height: 0; background: #525252; border-radius: 0 4px 4px 4px; padding: 7px 7px 0; display: flex; flex-direction: column; }
.ctl-row { display: flex; align-items: center; gap: 6px; height: 24px; flex: none; margin-bottom: 12px; white-space: nowrap; }
.ctl-row + .ctl-row { margin-bottom: 10px; }
.dark, .ctl-row .sel, .ctl-row .spin { background: #292929; }
.dark { height: 24px; border-radius: 4px; display: grid; place-items: center; color: #c8c8c8; }
.dark.off { background: #3e3e3e; }
.w36 { width: 36px; }
.sel-date { width: 133px; }
.sel-date svg { color: #808080; margin-bottom: 4px; }
.range { flex: 1; display: flex; align-items: center; }
.track { flex: 1; height: 9px; background: #292929; border-radius: 5px 0 0 5px; }
.knob { width: 14px; height: 14px; border-radius: 50%; background: #bebebe; }
.fill { width: 5px; height: 9px; background: #009245; margin: 0 -1px; }
.line { flex: 1; border-top: 1px solid #12824a; }
.dashed { border-top-style: dashed; }
.dim { background: #858585; }
.check { display: flex; align-items: center; gap: 4px; }
.check input { appearance: none; width: 18px; height: 18px; border-radius: 4px; background: #292929; display: grid; place-items: center; }
.check input::after { content: ""; width: 6px; height: 11px; border: solid #fff; border-width: 0 2px 2px 0; transform: rotate(40deg); margin-top: -2px; }
.progress { margin-left: 13px; }
.muted { color: #8c8c8c; width: 132px; }
.speed { margin-left: 11px; color: #e4e4e4; }
.speedbar { flex: none; width: 142px; margin-left: 8px; }
.spin-speed { width: 89px; }
.chart { flex: 1; min-height: 0; border-radius: 4px; overflow: hidden; background: #000; }
.chart svg { width: 100%; height: 100%; }
.hbar { height: 24px; flex: none; display: flex; align-items: center; justify-content: space-between; padding-bottom: 3px; }
.hbar .thumb { width: 21px; height: 9px; margin: 0 8px 0 auto; }
.bg { fill: #04090d; }
.axis { fill: #bcbcbc; font: 12px "DejaVu Sans Condensed", "DejaVu Sans", "Noto Sans", sans-serif; font-stretch: condensed; }
.mid { text-anchor: middle; }
.tag-text { fill: #fff; }
.grid { stroke: #1b1b20; }
.frame { stroke: #b0b0b0; fill: none; }
.pl { fill: #1fb335; font: bold 14px "Liberation Sans", Arial, sans-serif; }

/* Drawing tools */
.draw { background: #525252; border-radius: 4px; padding: 6px 3px 4px; display: flex; flex-direction: column; align-items: stretch; }
.draw button { position: relative; height: 31px; display: grid; place-items: center; }
.draw hr { width: 29px; margin: 0 auto; border: 0; border-top: 1px solid #6c6c6c; height: 1px; }
.draw .on { background: #292929; border-radius: 4px; height: 24px; width: 24px; margin: 4px auto 3px; }
.draw .corner::after { right: auto; left: 3px; bottom: 5px; border-color: transparent transparent #fff #fff; }
.grip { width: 19px; height: 3px; margin: 0 auto; background: conic-gradient(#a8a8a8 25%, transparent 0) 0 0 / 2px 2px; }
.draw .text-tool { font: 19px/20px "Liberation Serif", serif; color: #c8c8c8; }
.swatch { width: 14px; height: 14px; background: #0f0; border: 1px solid #bbb; }

/* Parameters */
.params { height: 100%; min-height: 0; background: #525252; border-radius: 4px; padding: 0 6px 6px; display: flex; flex-direction: column; }
.params header { height: 36px; flex: none; display: flex; align-items: center; gap: 14px; padding-right: 4px; }
.params h2 { flex: 1; color: #d4d4d4; margin-left: -5px; }
.vgrip { width: 4px; height: 24px; background: conic-gradient(#a8a8a8 25%, transparent 0) 0 0 / 2px 2px; }
.params-body { flex: 1; min-height: 0; background: #292929; border-radius: 4px; display: flex; padding: 14px 13px 17px 12px; gap: 6px; }
.params-list { flex: 1; min-height: 0; overflow: hidden; padding: 0 6px; border-bottom: 1px solid #5a5a5a; display: flex; flex-direction: column; gap: 6px; }
.params-list h3 { flex: none; height: 27px; padding-top: 5px; color: #808080; border-bottom: 1px solid #4a4a4a; margin-bottom: 4px; }
.params-list h3:first-child { height: 33px; padding-top: 11px; }
.field { flex: none; display: grid; grid-template-columns: minmax(0, 1fr) 140px; align-items: center; padding-left: 12px; }
.field label { white-space: nowrap; overflow: hidden; }
.field .sel { padding-left: 2px; color: #707070; }
.vbar-params { margin-bottom: 2px; }
.vbar-params .thumb { height: 255px; }

/* Trades */
.trades { flex: none; margin-top: 6px; }
.tabs-low .tab { color: #b4b4b4; }
.tabs-low .tab.on { color: #fff; }
.tab b { display: inline-block; margin-left: 1px; width: 20px; height: 20px; line-height: 20px; border-radius: 4px; background: #808080; color: #fff; font-size: 13px; font-weight: bold; }
.w63 { width: 63px; }
.w87 { width: 87px; }
.w100 { width: 100px; }
.w110 { width: 110px; }
.trades-panel { background: #525252; border-radius: 0 4px 4px 4px; padding: 7px 7px 0; }
.table-box { background: #292929; border-radius: 4px; height: 192px; display: flex; gap: 10px; padding: 0 6px 0 11px; }
table { flex: 1 1 0; width: 100%; height: 183px; min-width: 0; table-layout: fixed; border-collapse: collapse; text-align: center; }
th { font-weight: normal; color: #b4b4b4; height: 28px; padding: 0 0 0 2px; }
th div { height: 18px; overflow: hidden; padding: 0 1px; margin-right: 3px; border-right: 1px solid #4a4a4a; white-space: nowrap; }
td { padding: 0; height: 31px; border-bottom: 1px solid #424242; white-space: nowrap; overflow: hidden; }
.neg { color: #f26a12; }
.pos { color: #22ad34; }
.c38 { width: 38px; } .c42 { width: 42px; } .c67 { width: 67px; } .c72 { width: 72px; } .c84 { width: 84px; }
.c87 { width: 87px; } .c88 { width: 88px; } .c91 { width: 91px; } .c92 { width: 92px; } .c99 { width: 99px; }
.c100 { width: 100px; } .c102 { width: 102px; } .c129 { width: 129px; } .c190 { width: 190px; }
.vbar-table { padding: 6px 0; }
.vbar-table .thumb { margin-top: 74px; height: 36px; }
.sums { height: 33px; display: flex; margin-left: -5px; padding: 1px 3px 8px 0; color: #b8b8b8; }
.sums .icon-btn { width: 21px; }
.sums span { flex: 1; text-align: center; line-height: 24px; border-right: 1px solid #6c6c6c; white-space: nowrap; }
.sums span:nth-last-of-type(1) { border: 0; }
.sums em { font-style: normal; color: #f4f4f4; }
.status { height: 29px; flex: none; display: flex; align-items: center; gap: 6px; white-space: nowrap; padding-bottom: 2px; }
.grow { flex: 1; }
.utc { display: flex; align-items: center; gap: 12px; margin: 0 8px 0 6px; }
.utc svg { color: #707070; }
.bar { width: 1px; height: 13px; background: #e0e0e0; }
```
FILE: chart.js
```js
// Candles on a 14 x 2.851 unit grid: direction, high, body top, body bottom, low.
const CANDLES = `g 499 504 507 510|r 500 502 510 513|r 505 510 513 516|r 511 513 529 529|g 522 526 529 542|g 513 513 526 526|g 510 516 518 518|r 512 513 526 527|g 511 522 524 525|r 510 519 523 529
g 508 510 525 527|r 507 508 517 520|g 506 508 516 519|r 502 505 515 522|r 510 511 518 520|r 511 516 518 521|g 511 516 518 525|g 502 513 515 516|r 507 509 529 536|r 518 528 547 549
r 540 545 563 563|g 542 545 562 564|r 542 545 559 560|g 550 557 559 570|r 546 553 568 568|g 547 548 563 578|g 545 547 549 556|g 539 540 549 553|g 525 527 545 553|r 527 530 533 543
r 532 533 543 545|r 536 539 550 559|g 532 533 549 552|g 519 519 536 536|g 492 493 522 522|g 486 493 495 499|g 486 495 497 499|r 493 493 505 517|g 482 488 508 511|r 488 488 510 516
g 499 502 510 513|g 486 495 505 505|g 490 490 499 505|r 490 490 530 532|r 525 539 548 552|r 533 547 564 600|g 539 542 567 569|r 536 545 547 556|r 547 547 573 587|g 559 572 574 592
r 562 571 573 602|r 568 570 602 602|g 584 596 598 614|r 595 596 619 624|g 593 606 619 630|r 593 606 639 639|g 624 635 637 653|g 620 627 641 644|g 586 587 633 636|g 576 587 589 599
r 584 587 601 613|r 596 598 610 616|g 587 587 613 615|r 579 587 616 619|g 604 607 619 628|r 604 607 623 630|g 614 616 625 638|r 613 613 625 635|r 619 624 639 641|g 629 630 639 664
r 627 629 656 679|r 642 653 673 673|g 639 640 673 679|r 619 638 641 645|r 641 644 673 684|g 661 661 673 681|r 661 661 676 681|g 656 664 676 679|r 656 664 690 701|r 687 690 699 718
r 690 696 717 721|r 712 716 773 824|g 730 738 770 784|r 733 742 744 770|g 716 717 747 750|r 716 718 733 735|g 712 727 734 734|g 707 724 726 727|r 721 721 738 746|r 730 735 759 759
g 740 744 758 770|g 707 730 747 747|g 698 713 733 733|r 710 713 738 740|g 716 730 738 738|g 695 700 730 733|r 698 701 716 720|g 707 707 716 727|g 702 704 713 716|g 698 698 707 711
r 696 698 750 753|g 736 747 749 755|g 721 724 748 753|r 713 720 723 730|g 700 701 724 729|g 684 696 704 707|r 690 692 707 712|r 699 704 711 716|r 710 710 741 742|g 718 724 741 741
g 712 716 727 728|g 698 698 718 718|g 687 698 701 704|r 696 696 718 721|g 702 707 718 726|r 704 704 741 744|r 727 738 753 753|g 738 744 753 755|g 738 747 749 750|g 720 724 747 750
r 718 724 740 741|r 736 738 747 753|r 742 747 755 759|r 753 753 776 790|g 759 764 775 776|g 747 755 763 764|r 750 755 758 775|r 753 758 767 773|r 759 764 781 784|r 775 779 782 801
r 779 781 804 807|r 787 801 821 821|g 796 798 821 822|g 795 798 800 818|r 793 798 807 816|r 804 804 821 821|g 807 818 820 830|r 813 818 821 835|g 790 801 822 827|r 800 804 821 822
g 790 801 821 825|r 801 801 810 818|r 804 804 815 818|g 801 801 815 816|r 798 801 827 830|g 824 825 827 841|r 818 822 830 833|g 818 827 830 833|r 824 824 838 840|r 833 835 846 850
g 830 843 846 850|r 838 844 847 852|r 844 847 850 852|r 847 850 861 867|r 855 861 875 884|g 847 847 875 878|r 847 850 856 858|r 847 855 871 873|r 863 867 907 910|g 875 878 907 932
g 873 880 883 896|r 870 878 896 901|r 887 895 915 916|g 904 907 910 927|g 892 901 910 912|g 881 881 904 912|r 867 881 892 893|g 864 870 892 893|g 861 867 875 881|r 855 858 875 878
r 861 867 875 878|r 864 867 875 881|r 870 873 881 887|g 864 867 881 889|g 858 866 869 873|r 858 867 873 881|r 873 875 890 893|r 887 887 909 924|g 886 889 909 915|r 884 889 892 898
g 884 887 893 895|r 887 887 895 896|r 893 895 907 909|r 889 895 909 910|r 895 895 932 938|g 918 921 932 944|r 918 921 952 962|r 932 949 962 965|r 961 961 1001 1035|g 955 970 1001 1006
r 966 970 972 989|r 964 972 975 981|g 958 961 979 981|g 944 944 962 964|g 921 941 944 949|g 927 929 941 946|r 924 929 941 942|g 924 924 941 941|r 873 875 892 892`;

const out = [];
const add = s => out.push(s);
const ramp = (id, x1, x2) => `<linearGradient id="${id}" gradientUnits="userSpaceOnUse" x1="${x1}" y1="0" x2="${x2}" y2="0"><stop offset="0" stop-color="#1e2c52"/><stop offset=".25" stop-color="#1f3050"/><stop offset=".6" stop-color="#233d52"/><stop offset="1" stop-color="#29494e"/></linearGradient>`;

add(`<defs>${ramp('outer', 235, 480)}${ramp('inner', 371, 700)}${ramp('upper', 320, 760)}${ramp('lower', 303, 570)}${ramp('base', 450, 720)}
<linearGradient id="nodeV" x1="0" y1="0" x2="0" y2="1"><stop offset="0" stop-color="#1f2f54"/><stop offset="1" stop-color="#29494e"/></linearGradient>
<linearGradient id="nodeU" x1="0" y1="1" x2="0" y2="0"><stop offset="0" stop-color="#1f2f54"/><stop offset="1" stop-color="#29494e"/></linearGradient>
<linearGradient id="nodeL" x1="0" y1="0" x2="1" y2="0"><stop offset="0" stop-color="#29494e"/><stop offset="1" stop-color="#1f2f54"/></linearGradient>
<linearGradient id="nodeR" x1="0" y1="0" x2="1" y2="0"><stop offset="0" stop-color="#1f2f54"/><stop offset="1" stop-color="#29494e"/></linearGradient>
<clipPath id="plot"><rect width="998" height="503"/></clipPath></defs>
<rect class="bg" width="998" height="503"/>
<g clip-path="url(#plot)"><g fill="none" stroke-width="13">
<path stroke="url(#outer)" d="M277 422A304 304 0 0 1 539-34"/>
<path stroke="url(#inner)" d="M394 355A168 168 0 1 1 687 185"/>
<path stroke="url(#upper)" d="M335 152A235 235 0 0 1 741 146L801 112A304 304 0 0 0 668-6"/>
<path stroke="url(#lower)" d="M303 269A235 235 0 0 0 539 505"/>
<path stroke="url(#base)" d="M469 423A168 168 0 0 0 682 360L741 394A235 235 0 0 1 640 485"/>
<path stroke="url(#base)" d="M804 422A304 304 0 0 1 539 574"/></g>
<circle cx="277" cy="422" r="20" fill="url(#nodeL)"/><circle cx="394" cy="355" r="20" fill="url(#nodeR)"/>
<circle cx="687" cy="185" r="20" fill="url(#nodeL)"/><circle cx="335" cy="152" r="20" fill="url(#nodeV)"/>
<circle cx="668" cy="-6" r="20" fill="url(#nodeR)"/><circle cx="303" cy="269" r="20" fill="url(#nodeU)"/>
<circle cx="539" cy="506" r="20" fill="url(#nodeL)"/><circle cx="469" cy="423" r="20" fill="url(#nodeL)"/>
<circle cx="640" cy="485" r="20" fill="url(#nodeR)"/><circle cx="804" cy="422" r="20" fill="url(#nodeL)"/>
<circle cx="335" cy="496" r="20" fill="url(#nodeR)"/></g>`);

for (let x = 18.5; x < 995; x += 65) add(`<path class="grid" d="M${x} 0V503"/>`);
for (let i = 0; i < 18; i++) {
  const y = Math.round(1.6 + i * 29.4) + .5;
  add(`<path class="grid" d="M0 ${y}H998"/>`);
  if (i && i < 17 && i !== 10) {
    const price = (5300 - i * 20).toFixed(2);
    add(`<path class="frame" d="M998 ${y}h3"/><text class="axis" x="1003" y="${y + 5.5}">${price}</text>`);
  }
}
add('<path d="M993.500 0V503" stroke="#55565a"/>');

CANDLES.split(/[|\n]/).forEach((row, i) => {
  const [dir, ...v] = row.split(' ');
  const [hi, top, bottom, lo] = v.map(n => Math.round(n / 2.851 - 1));
  const x = 3 + i * 5;
  const fill = dir === 'g' ? '#048038' : '#f4591f';
  add(`<g fill="${fill}"><rect x="${x}" y="${hi}" width="1" height="${Math.max(1, lo - hi)}"/><rect x="${x - 1}" y="${top}" width="3" height="${Math.max(1, bottom - top)}"/></g>`);
});

add(`<path d="M0 298.500H992" stroke="#f4591f"/>
<path class="frame" d="M0 503.500H997.500V0"/>`);
['12 Mar 12:54', '12 Mar 14:12', '12 Mar 15:30', '12 Mar 16:48', '12 Mar 18:06', '12 Mar 19:24', '12 Mar 20:42', '13 Mar 00:00'].forEach((t, i) => {
  const x = 83.5 + i * 130;
  add(`<path class="frame" d="M${x} 503v4"/><text class="axis mid" x="${x + .5}" y="520">${t}</text>`);
});
add(`<path d="M988 299l7-8h50q3 0 3 3v10q0 3-3 3h-50z" fill="#f4591f"/><text class="axis tag-text" x="996" y="303">5098.10</text>
<rect x="456" y="6" width="122" height="24" rx="4" fill="#1d2020"/><text class="pl mid" x="517" y="23">+80.87 € (+81%)</text>
<path class="frame" d="M977 12.500h6.500v75H977"/><text class="axis mid" transform="translate(979 50) rotate(-90)">5000 pips</text>
<path d="M780.500 493.500h20l5.500-6 5.500 6h10q2 0 2 2v11q0 2-2 2h-41q-1 0-1-2v-11q0-2 1-2z" fill="#000" stroke="#d8d8d8"/>
<path d="M783.500 497v9M785.500 497v9" stroke="#aaa" stroke-dasharray="1 1"/>`);
document.getElementById('chart').innerHTML = out.join('');
```
